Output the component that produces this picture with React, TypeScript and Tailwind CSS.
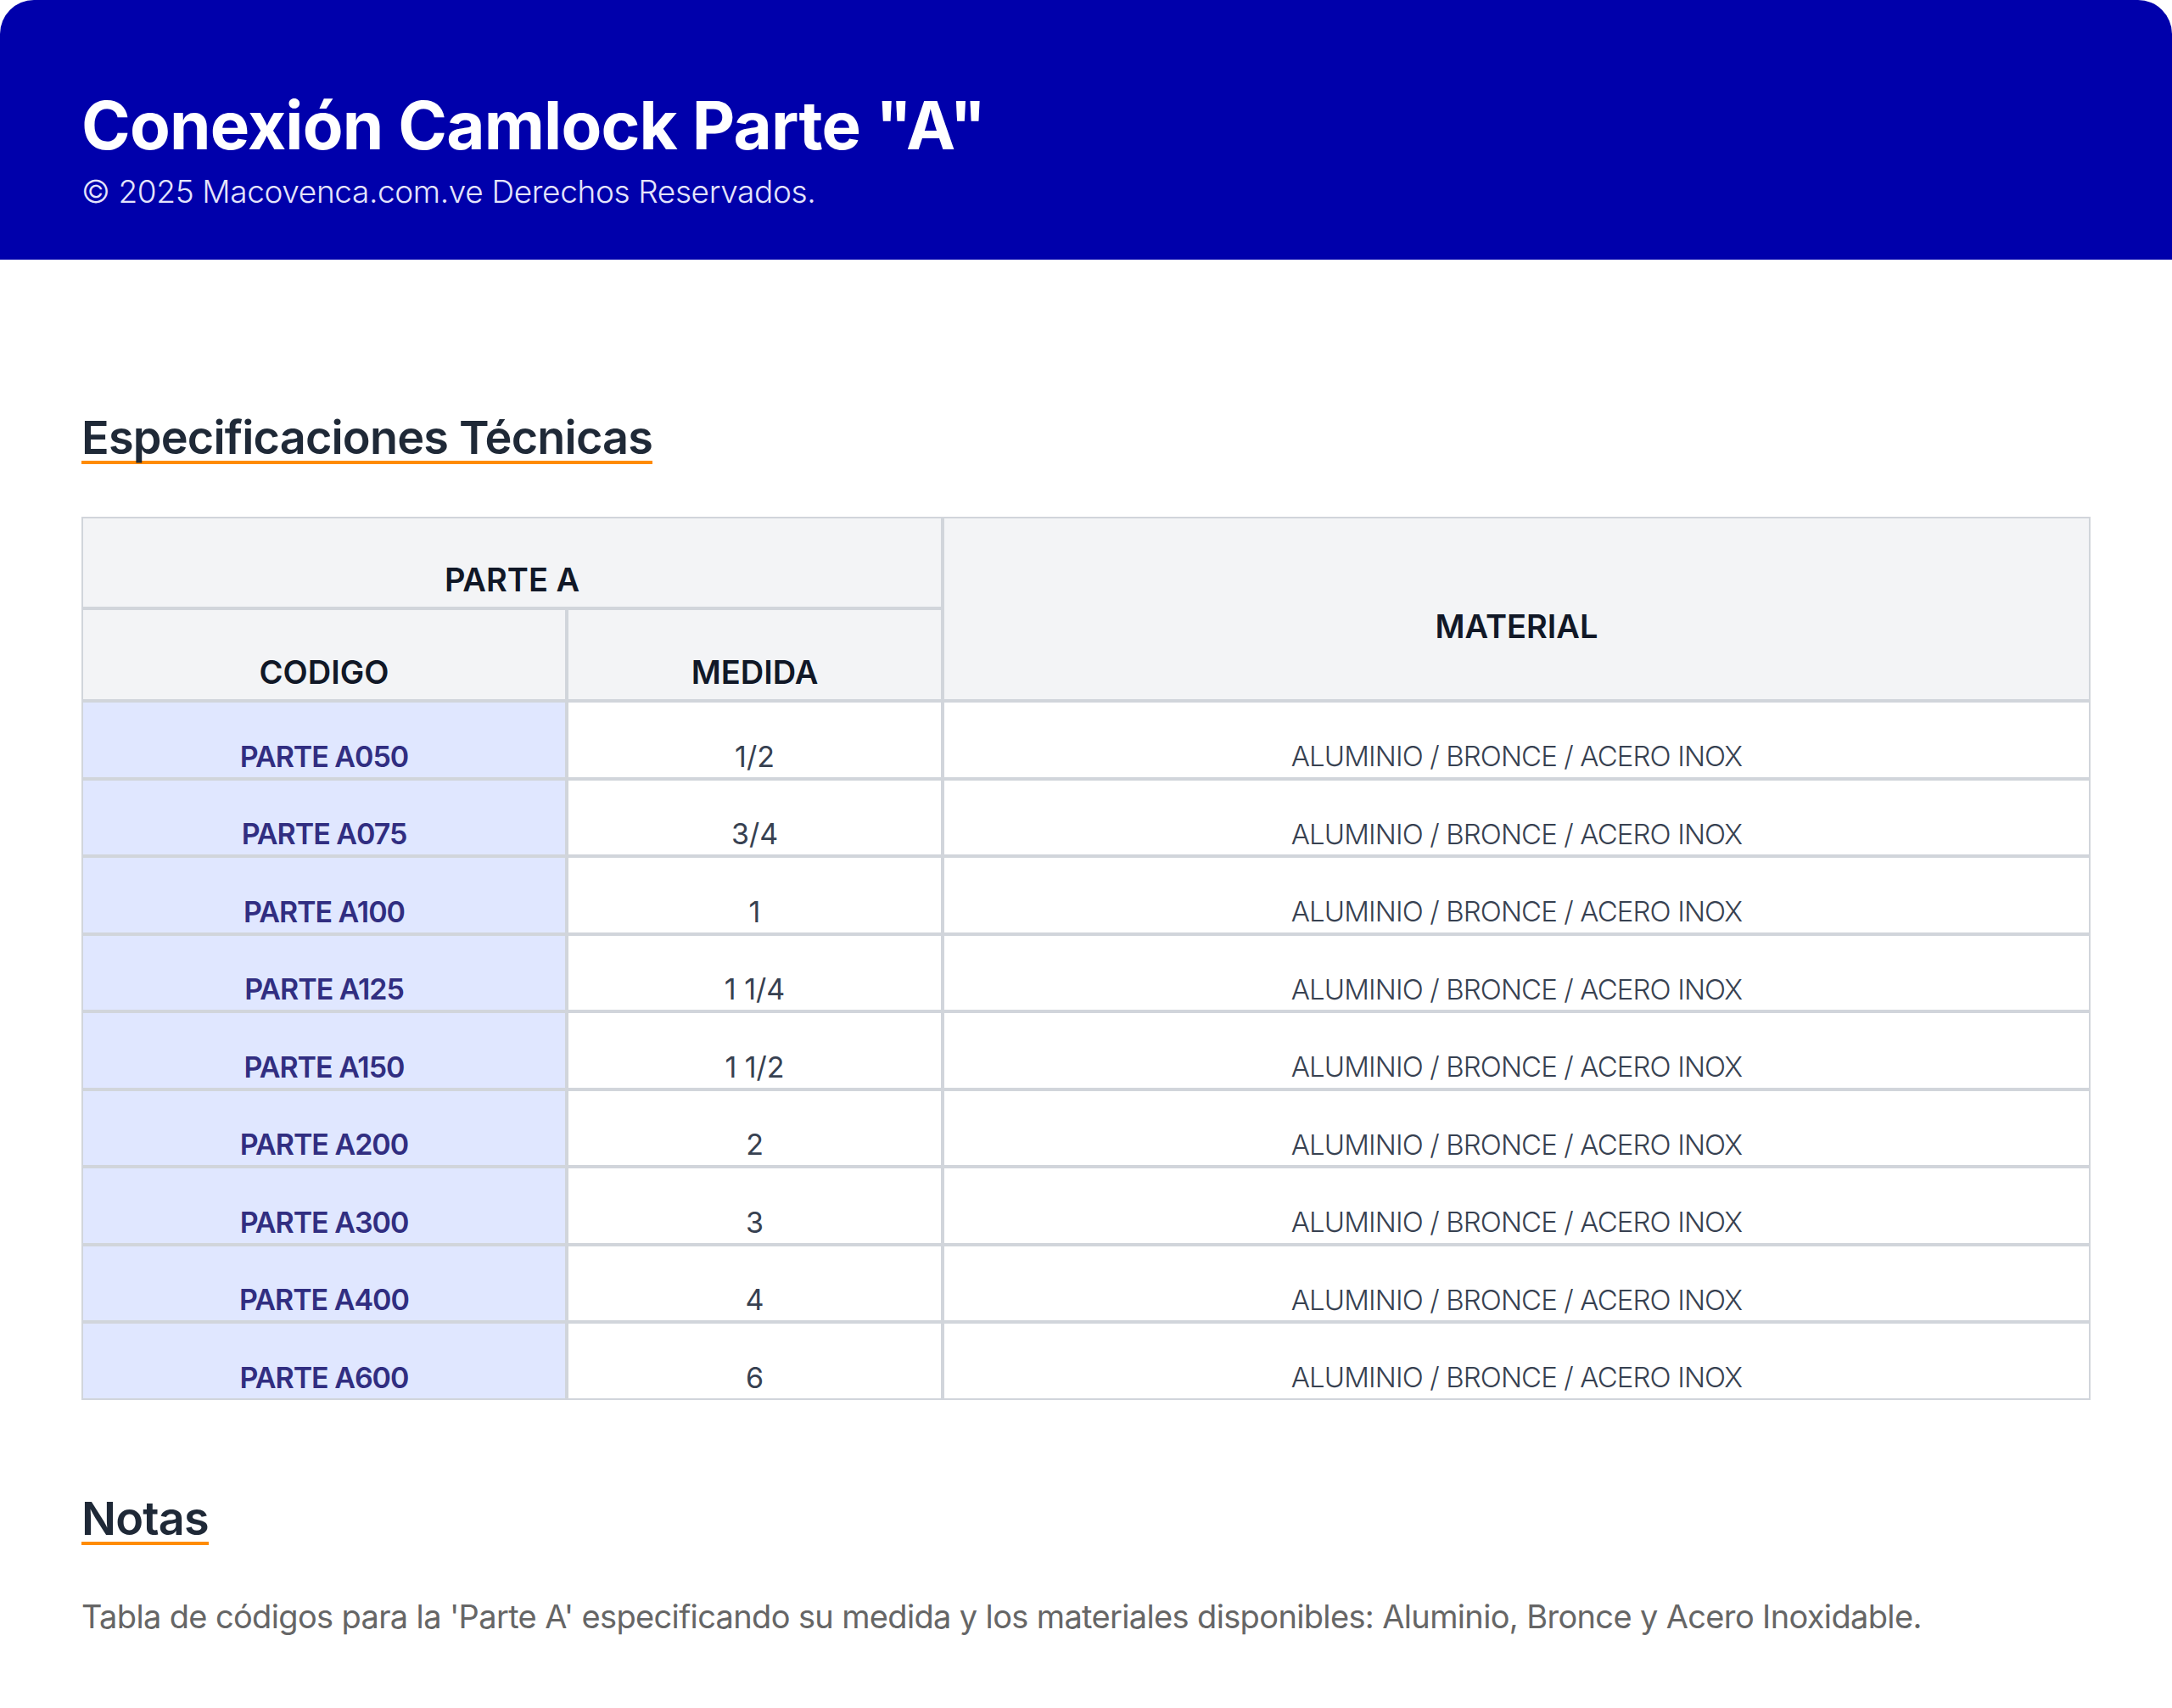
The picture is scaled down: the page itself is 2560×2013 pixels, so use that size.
import React from 'react';

const rows = [
  { code: 'PARTE A050', size: '1/2' },
  { code: 'PARTE A075', size: '3/4' },
  { code: 'PARTE A100', size: '1' },
  { code: 'PARTE A125', size: '1 1/4' },
  { code: 'PARTE A150', size: '1 1/2' },
  { code: 'PARTE A200', size: '2' },
  { code: 'PARTE A300', size: '3' },
  { code: 'PARTE A400', size: '4' },
  { code: 'PARTE A600', size: '6' },
];

const material = 'ALUMINIO / BRONCE / ACERO INOX';

export default function App() {
  return (
    <div className="min-h-[2013px] bg-white font-['Inter','Noto_Sans',sans-serif]">
      {/* cabecera */}
      <header className="h-[306px] rounded-t-[40px] bg-[#0000ab] px-[96px] pt-[109px]">
        <h1 className="text-[78px] font-bold leading-none tracking-[-0.01em] text-white">
          Conexión Camlock Parte "A"
        </h1>
        <p className="mt-[20px] text-[37px] font-light leading-none tracking-[-0.01em] text-[#e4e4fb]">
          © 2025 Macovenca.com.ve Derechos Reservados.
        </p>
      </header>

      <main className="px-[96px]">
        <h2 className="mt-[183px] inline-block border-b-4 border-[#ff8c00] text-[54px] font-semibold leading-none tracking-[-0.015em] text-[#1f2937]">
          Especificaciones Técnicas
        </h2>

        <table className="mt-[62px] w-full border-separate border-spacing-0 text-center">
          <thead>
            <tr className="h-[108px]">
              <th
                colSpan={2}
                className="border-2 border-[#d1d5db] bg-[#f3f4f6] pt-[40px] align-middle text-[38px] font-semibold leading-none text-[#111827]"
              >
                PARTE A
              </th>
              <th
                rowSpan={2}
                className="border-2 border-[#d1d5db] bg-[#f3f4f6] pt-[40px] align-middle text-[38px] font-semibold leading-none text-[#111827]"
              >
                MATERIAL
              </th>
            </tr>
            <tr className="h-[109px]">
              <th className="w-[572px] border-2 border-[#d1d5db] bg-[#f3f4f6] pt-[40px] align-middle text-[38px] font-semibold leading-none text-[#111827]">
                CODIGO
              </th>
              <th className="w-[443px] border-2 border-[#d1d5db] bg-[#f3f4f6] pt-[40px] align-middle text-[38px] font-semibold leading-none text-[#111827]">
                MEDIDA
              </th>
            </tr>
          </thead>
          <tbody>
            {rows.map(r => (
              <tr key={r.code} className="h-[91.5px]">
                <td className="border-2 border-[#d1d5db] bg-[#e0e7ff] pt-[40px] align-middle text-[34px] font-semibold leading-none tracking-[-0.03em] text-[#312e81]">
                  {r.code}
                </td>
                <td className="border-2 border-[#d1d5db] pt-[40px] align-middle text-[34px] leading-none text-[#374151]">
                  {r.size}
                </td>
                <td className="border-2 border-[#d1d5db] pt-[40px] align-middle text-[33px] font-light leading-none tracking-[-0.027em] text-[#374151]">
                  {material}
                </td>
              </tr>
            ))}
          </tbody>
        </table>

        <h2 className="mt-[113px] inline-block border-b-4 border-[#ff8c00] text-[54px] font-semibold leading-none tracking-[-0.015em] text-[#1f2937]">
          Notas
        </h2>
        <p className="mt-[65px] text-[38px] leading-none tracking-[-0.017em] text-[#666666]">
          Tabla de códigos para la 'Parte A' especificando su medida y los materiales disponibles: Aluminio, Bronce y Acero Inoxidable.
        </p>
      </main>
    </div>
  );
}
